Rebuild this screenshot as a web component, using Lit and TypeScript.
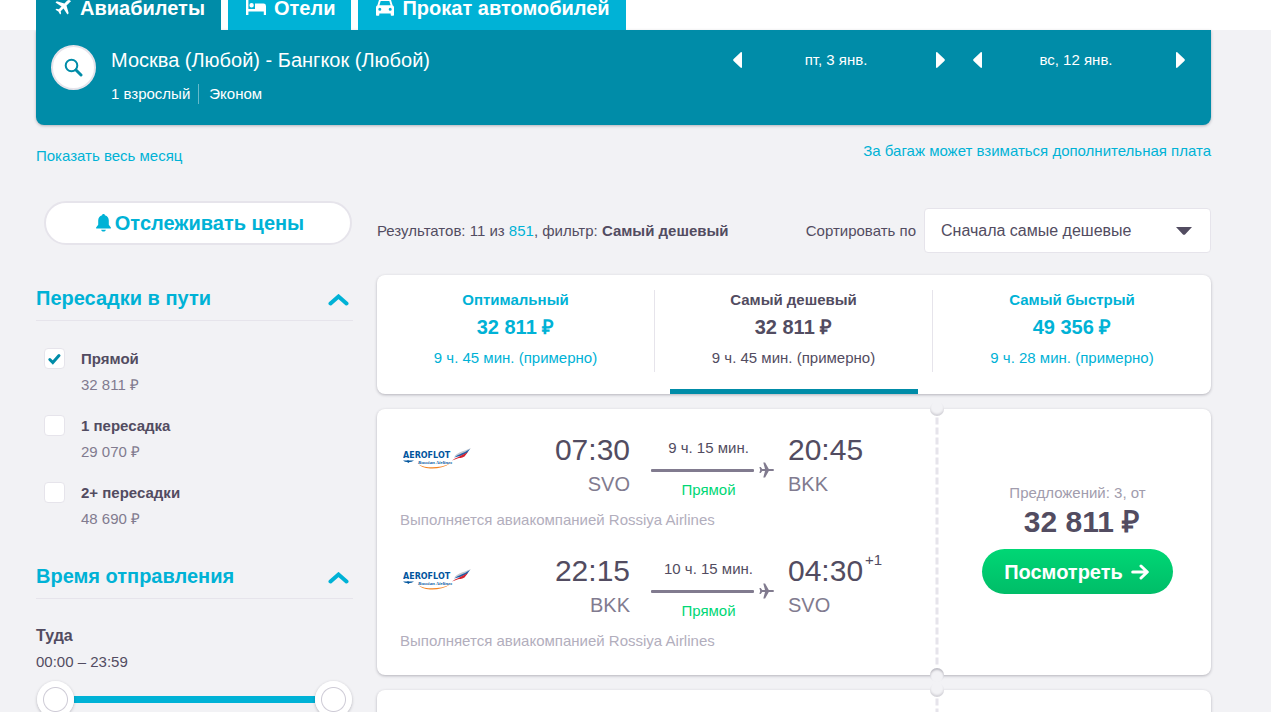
import { LitElement, html, svg, css, nothing } from "lit";
import { customElement, property, state } from "lit/decorators.js";
import { classMap } from "lit/directives/class-map.js";

interface Leg {
  from: string;
  depart: string;
  to: string;
  arrive: string;
  duration: string;
  nextDay?: string;
}

const airplanePath =
  "M16 1.2c-1-1-2.600-.7-3.700.4L9.900 4 2.300 1.700 1 3l6 3.900-2.700 2.800-2.300-.4-1 1 2.900 1.700L5.600 15l1-1-.4-2.300L9 9l3.900 6 1.300-1.300L12 6.100l2.400-2.400C15.500 2.600 17 2.200 16 1.200z";

const icons = {
  plane: svg`<path d=${airplanePath} transform="translate(0.500 0.500)" />`,
  bed: svg`<path d="M0 1h2.400v9H0zM0 10h20v2.600H0zM17.800 12h2.200v4h-2.200zM0 12h2.400v4H0zM5.600 4a2.200 2.200 0 1 1 0 4.400 2.200 2.200 0 0 1 0-4.400zM9 4.600h8.500A2.500 2.500 0 0 1 20 7v3H9z" />`,
  car: svg`<path fill-rule="evenodd" d="M4.600 0h8.800c.8 0 1.300.4 1.600 1.100l1.700 5.400c.8.400 1.300 1.100 1.300 2v7.200c0 .7-.4 1.100-1.100 1.100h-1.100c-.7 0-1.100-.4-1.100-1.100V14.500H3.300v1.200c0 .7-.4 1.100-1.100 1.100H1.100C.4 16.800 0 16.400 0 15.700V8.500c0-.9.5-1.600 1.300-2L3 1.100C3.300.4 3.800 0 4.600 0zM4.700 1.900 3.400 6.200h11.200l-1.300-4.300zM3.800 8.700a1.500 1.500 0 1 0 0 3 1.500 1.500 0 0 0 0-3zm10.400 0a1.500 1.500 0 1 0 0 3 1.500 1.500 0 0 0 0-3z" />`,
};

const aeroflotLogo = html`
  <svg class="logo" width="70" height="22" viewBox="0 0 70 22" role="img" aria-label="Aeroflot">
    <text x="0" y="10" font-family="DejaVu Sans" font-weight="700" font-size="8" fill="#02559d">AEROFLOT</text>
    <path fill="#02559d" d="M0 12.600h4l1-.6 1 .6h5l-2.500 1.200-2 .2-1.200 1-1.200-1-2.100-.2z" />
    <text x="15" y="16" font-family="Liberation Serif" font-style="italic" font-weight="700" font-size="5" fill="#02559d">Russian Airlines</text>
    <path fill="#f58220" d="M16 16.400c6 3.700 20 4.400 31-.9-9 6.500-26 6.600-31 .9z" />
    <path fill="#c3c9d2" d="M51 8.500c3-3.500 8-5 11-6l6-2.500-3 3.500-8 3z" />
    <path fill="#1f5fa8" d="M51 9.500c4-3 8-4 11-5.500l5-3-3 4-7 3z" />
    <path fill="#d5232f" d="M49 12.500c4-3 8-4 11-6l5-2.500-3.500 4.500c-3 2-5 1-7 2z" />
  </svg>
`;

@customElement("flight-leg")
class FlightLeg extends LitElement {
  @property({ attribute: false }) leg!: Leg;

  static styles = css`
    :host {
      display: block;
    }
    .grid {
      display: grid;
      grid-template-columns: 1fr auto 123px 142px;
      height: 78px;
    }
    .logo {
      margin: 16px 0 0 3px;
    }
    .point {
      color: #524c61;
    }
    .depart {
      text-align: right;
    }
    .time {
      display: flex;
      gap: 2px;
      font-size: 30px;
      line-height: 36px;
    }
    .next {
      font-size: 15px;
      line-height: 14px;
    }
    .code {
      margin-top: 4px;
      font-size: 20px;
      line-height: 24px;
      color: #817b8f;
    }
    .route {
      padding-top: 6px;
      text-align: center;
      margin: 0 14px 0 21px;
      width: 123px;
    }
    .grid {
      grid-template-columns: 1fr auto auto 142px;
    }
    .duration,
    .stops {
      padding-right: 8px;
    }
    .path {
      display: flex;
      align-items: center;
      gap: 5px;
      height: 16px;
      margin: 4px 0 2px;
    }
    .line {
      flex: 1;
      height: 3px;
      border-radius: 1px;
      background: #817b8f;
    }
    .stops {
      color: #00d775;
    }
    .operator {
      line-height: 20px;
      color: #b2aebd;
    }
  `;

  render() {
    const l = this.leg;
    return html`
      <div class="grid">
        <div>${aeroflotLogo}</div>
        <div class="point depart">
          <div class="time">${l.depart}</div>
          <div class="code">${l.from}</div>
        </div>
        <div class="route">
          <div class="duration">${l.duration}</div>
          <div class="path">
            <span class="line"></span>
            <svg width="15" height="16" viewBox="0 0 15 16" fill="#817b8f" aria-hidden="true">
              <path d="M15 8c0 .6-.7 1-1.600 1H9.800l-3.700 6.500H4.300L6 9H3.200L1.700 11H.4l.8-3-.8-3h1.300l1.500 2H6L4.300.5h1.800L9.800 7h3.600C14.300 7 15 7.400 15 8z" />
            </svg>
          </div>
          <div class="stops">Прямой</div>
        </div>
        <div class="point">
          <div class="time">
            <span>${l.arrive}</span>${l.nextDay ? html`<span class="next">${l.nextDay}</span>` : nothing}
          </div>
          <div class="code">${l.to}</div>
        </div>
      </div>
      <div class="operator">Выполняется авиакомпанией Rossiya Airlines</div>
    `;
  }
}

@customElement("flight-ticket")
class FlightTicket extends LitElement {
  @property({ attribute: false }) legs: Leg[] = [];
  @property() price = "";

  static styles = css`
    :host {
      display: block;
    }
    .card {
      display: flex;
      border-radius: 8px;
      background: #fff;
      box-shadow: 0 1px 3px rgba(37, 32, 51, 0.3);
    }
    .legs {
      flex: 1;
      display: flex;
      flex-direction: column;
      gap: 23px;
      padding: 23px 0 24px 23px;
    }
    .tear {
      position: relative;
      width: 14px;
    }
    .tear svg {
      position: absolute;
      left: 5px;
      top: 7px;
      height: calc(100% - 16px);
    }
    .notch {
      position: absolute;
      left: 0;
      width: 14px;
      height: 14px;
      border-radius: 7px;
      background: #f2f2f5;
    }
    .top {
      top: -7px;
      box-shadow: inset 0 -2px 2px rgba(37, 32, 51, 0.15);
    }
    .bottom {
      bottom: -7px;
      box-shadow: inset 0 2px 2px rgba(37, 32, 51, 0.25);
    }
    .offer {
      display: flex;
      flex-direction: column;
      align-items: center;
      justify-content: center;
      width: 267px;
      padding-bottom: 7px;
      box-sizing: border-box;
    }
    .count {
      color: #a19cad;
    }
    .price {
      padding-left: 8px;
      font-size: 30px;
      line-height: 38px;
      font-weight: 700;
      color: #524c61;
    }
    .view {
      display: flex;
      align-items: center;
      gap: 8px;
      height: 45px;
      margin-top: 8px;
      padding: 0 24px 0 22px;
      border: 0;
      border-radius: 23px;
      background: linear-gradient(#00d775, #00bd68);
      color: #fff;
      font: 700 20px/24px "Liberation Sans", Arial, sans-serif;
      cursor: pointer;
    }
  `;

  render() {
    return html`
      <article class="card">
        <div class="legs">
          ${this.legs.map((leg) => html`<flight-leg .leg=${leg}></flight-leg>`)}
        </div>
        <div class="tear">
          <svg width="4" aria-hidden="true">
            <line x1="2" y1="3" x2="2" y2="100%" stroke="#e6e4eb" stroke-width="3" stroke-dasharray="4 6" stroke-linecap="square" />
          </svg>
          <span class="notch top"></span>
          <span class="notch bottom"></span>
        </div>
        <div class="offer">
          <div class="count">Предложений: 3, от</div>
          <div class="price">${this.price}</div>
          <button class="view" type="button">
            Посмотреть
            <svg width="18" height="16" viewBox="0 0 18 16" fill="none" stroke="#fff" stroke-width="3" stroke-linecap="round" stroke-linejoin="round" aria-hidden="true">
              <path d="M1.700 8h14M10 2l6.300 6L10 14" />
            </svg>
          </button>
        </div>
      </article>
    `;
  }
}

@customElement("app-root")
class AppRoot extends LitElement {
  @state() private selected = 1;

  private readonly products = [
    { name: "Авиабилеты", icon: icons.plane, width: 18 },
    { name: "Отели", icon: icons.bed, width: 20 },
    { name: "Прокат автомобилей", icon: icons.car, width: 18 },
  ];

  private readonly dates = ["пт, 3 янв.", "вс, 12 янв."];

  private readonly stops = [
    { id: "direct", name: "Прямой", price: "32 811 ₽", checked: true },
    { id: "one", name: "1 пересадка", price: "29 070 ₽", checked: false },
    { id: "many", name: "2+ пересадки", price: "48 690 ₽", checked: false },
  ];

  private readonly sorts = [
    { name: "Оптимальный", price: "32 811 ₽", time: "9 ч. 45 мин. (примерно)" },
    { name: "Самый дешевый", price: "32 811 ₽", time: "9 ч. 45 мин. (примерно)" },
    { name: "Самый быстрый", price: "49 356 ₽", time: "9 ч. 28 мин. (примерно)" },
  ];

  private readonly legs: Leg[] = [
    { from: "SVO", depart: "07:30", to: "BKK", arrive: "20:45", duration: "9 ч. 15 мин." },
    { from: "BKK", depart: "22:15", to: "SVO", arrive: "04:30", duration: "10 ч. 15 мин.", nextDay: "+1" },
  ];

  static styles = css`
    :host {
      display: block;
      height: 100vh;
      overflow: hidden;
      background: #f2f2f5;
      color: #524c61;
      font: 15px/20px "Liberation Sans", Arial, sans-serif;
    }
    button,
    select {
      font: inherit;
      color: inherit;
      border: 0;
      background: none;
      padding: 0;
      cursor: pointer;
    }
    a {
      color: #00b2d6;
      text-decoration: none;
    }
    .header {
      display: flex;
      align-items: flex-end;
      gap: 7px;
      height: 30px;
      padding-left: 36px;
      overflow: hidden;
      background: #fff;
    }
    .product {
      display: flex;
      align-items: center;
      gap: 8px;
      flex: none;
      height: 45px;
      padding: 0 16px 0 18px;
      background: #00b2d6;
      color: #fff;
      font-size: 20px;
      font-weight: 700;
    }
    .product.active {
      background: #008ca8;
    }
    .page {
      padding: 0 60px 0 36px;
    }
    .search {
      display: flex;
      justify-content: space-between;
      height: 95px;
      box-sizing: border-box;
      padding: 15px 26px 0 15px;
      border-radius: 0 0 8px 8px;
      background: #008ca8;
      color: #fff;
      box-shadow: 0 1px 3px rgba(37, 32, 51, 0.3);
    }
    .query {
      display: flex;
      gap: 15px;
    }
    .lens {
      display: grid;
      place-items: center;
      width: 45px;
      height: 45px;
      box-sizing: border-box;
      border: 2px solid #e6e4eb;
      border-radius: 50%;
      background: #fff;
    }
    .route {
      margin: 0 0 12px;
      padding-top: 3px;
      font-size: 20px;
      line-height: 24px;
      font-weight: 400;
    }
    .details {
      display: flex;
      align-items: center;
      gap: 8px;
    }
    .cabin {
      padding-left: 10px;
      border-left: 1px solid #66bacb;
    }
    .dates {
      display: flex;
      gap: 28px;
    }
    .date {
      display: flex;
      align-items: center;
      justify-content: space-between;
      width: 212px;
      height: 30px;
    }
    .arrow {
      display: flex;
    }
    .day {
      padding-right: 6px;
    }
    .notes {
      display: flex;
      justify-content: space-between;
      height: 76px;
    }
    .month {
      padding-top: 21px;
    }
    .baggage {
      padding-top: 16px;
    }
    .columns {
      display: grid;
      grid-template-columns: 317px minmax(0, 1fr);
      gap: 24px;
    }
    .track {
      display: flex;
      align-items: center;
      justify-content: center;
      gap: 4px;
      width: 308px;
      height: 44px;
      margin: 0 0 41px 8px;
      padding-left: 4px;
      border: 2px solid #e6e4eb;
      border-radius: 22px;
      background: #fff;
      color: #00b2d6;
      font-size: 20px;
      font-weight: 700;
    }
    .group {
      margin-bottom: 35px;
    }
    .heading {
      margin: 0 0 27px;
      border-bottom: 1px solid #e6e4eb;
    }
    .toggle {
      display: flex;
      align-items: center;
      justify-content: space-between;
      width: 100%;
      padding: 0 4px 10px 0;
      color: #00b2d6;
      font-size: 20px;
      line-height: 24px;
      font-weight: 700;
    }
    .toggle svg {
      padding-top: 3px;
    }
    .options {
      display: flex;
      flex-direction: column;
      gap: 21px;
      padding-top: 1px;
    }
    .option {
      display: grid;
      grid-template-columns: 21px 1fr;
      gap: 6px 16px;
      padding-left: 8px;
    }
    .box {
      appearance: none;
      width: 21px;
      height: 21px;
      margin: -1px 0 0;
      border: 1px solid #e6e4eb;
      border-radius: 4px;
      background: #fff;
    }
    .box:checked {
      background: #fff
        url("data:image/svg+xml,%3Csvg xmlns='http://www.w3.org/2000/svg' viewBox='0 0 19 19'%3E%3Cpath d='M4.800 10.500l3 3L14 6.500' fill='none' stroke='%23008ca8' stroke-width='3' stroke-linecap='round'/%3E%3C/svg%3E")
        center / 19px;
    }
    .option b,
    .direction b {
      font-weight: 700;
    }
    .option .cost {
      grid-column: 2;
      color: #817b8f;
    }
    .direction {
      display: flex;
      flex-direction: column;
      gap: 6px;
    }
    .direction b {
      font-size: 16px;
    }
    .slider {
      display: grid;
      align-items: center;
      margin: 3px 1px 0;
      background: linear-gradient(#00b2d6, #00b2d6) center / calc(100% - 74px) 7px no-repeat;
    }
    .slider input {
      grid-area: 1 / 1;
      appearance: none;
      width: 100%;
      height: 37px;
      margin: 0;
      background: none;
      pointer-events: none;
    }
    .slider input::-webkit-slider-thumb {
      appearance: none;
      width: 37px;
      height: 37px;
      border-radius: 50%;
      background: radial-gradient(circle, #fff 11px, #cecbd6 12px, #cecbd6 12px, #fff 13px);
      box-shadow: 0 1px 3px rgba(37, 32, 51, 0.3);
      pointer-events: auto;
    }
    .results {
      padding-top: 7px;
    }
    .bar {
      display: flex;
      align-items: center;
      justify-content: space-between;
      margin-bottom: 22px;
    }
    .sort {
      display: flex;
      align-items: center;
      gap: 8px;
    }
    .select {
      appearance: none;
      width: 287px;
      height: 45px;
      padding: 0 16px;
      border: 1px solid #e6e4eb;
      border-radius: 4px;
      font-size: 16px;
      background: #fff
        url("data:image/svg+xml,%3Csvg xmlns='http://www.w3.org/2000/svg' viewBox='0 0 16 8'%3E%3Cpath d='M0 0h16L9.500 7a2 2 0 0 1-3 0z' fill='%23524c61'/%3E%3C/svg%3E")
        right 18px center / 16px 8px no-repeat;
    }
    .tabs {
      display: grid;
      grid-template-columns: repeat(3, 1fr);
      border-radius: 8px;
      background: #fff;
      box-shadow: 0 1px 3px rgba(37, 32, 51, 0.3);
    }
    .tab {
      display: flex;
      flex-direction: column;
      padding: 15px 0 0;
      color: #00b2d6;
    }
    .tab.active {
      color: #524c61;
    }
    .tab .body {
      display: flex;
      flex-direction: column;
      align-items: center;
      width: 100%;
      height: 82px;
      box-sizing: border-box;
      border-right: 1px solid #e6e4eb;
    }
    .tab:last-child .body {
      border-right: 0;
    }
    .tab .sum {
      margin: 5px 0 9px;
      font-size: 20px;
      line-height: 24px;
      font-weight: 700;
    }
    .marker {
      align-self: stretch;
      height: 5px;
      margin: 17px 15px 0;
    }
    .active .marker {
      background: #008ca8;
    }
    flight-ticket {
      margin-top: 15px;
    }
  `;

  private heading(title: string) {
    return html`
      <h2 class="heading">
        <button class="toggle" type="button" aria-expanded="true">
          ${title}
          <svg width="21" height="12" viewBox="0 0 21 12" fill="none" stroke="#00b2d6" stroke-width="4" stroke-linecap="round" aria-hidden="true">
            <path d="M2.500 9.500l8-7 8 7" />
          </svg>
        </button>
      </h2>
    `;
  }

  render() {
    return html`
      <nav class="header">
        ${this.products.map(
          (p, i) => html`
            <a href="#" class=${classMap({ product: true, active: i === 0 })}>
              <svg width=${p.width} height="17" viewBox="0 0 ${p.width} 17" fill="#fff" aria-hidden="true">${p.icon}</svg>
              ${p.name}
            </a>
          `,
        )}
      </nav>
      <div class="page">
        <section class="search">
          <div class="query">
            <button class="lens" type="button" aria-label="Изменить поиск">
              <svg width="19" height="19" viewBox="0 0 19 19" fill="none" stroke="#008ca8" stroke-linecap="round" aria-hidden="true">
                <circle cx="7.500" cy="7.500" r="5.800" stroke-width="2" />
                <path d="M12 12l5 5" stroke-width="3" />
              </svg>
            </button>
            <div>
              <h1 class="route">Москва (Любой) - Бангкок (Любой)</h1>
              <div class="details"><span>1 взрослый</span><span class="cabin">Эконом</span></div>
            </div>
          </div>
          <div class="dates">
            ${this.dates.map(
              (d) => html`
                <div class="date">
                  <button class="arrow" type="button" aria-label="Предыдущий день">
                    <svg width="9" height="16" viewBox="0 0 9 16" fill="#fff"><path d="M9 1v14c0 1-.8 1.300-1.500.6L.6 9a1.500 1.500 0 0 1 0-2L7.500.4C8.200-.3 9 0 9 1z" /></svg>
                  </button>
                  <span class="day">${d}</span>
                  <button class="arrow" type="button" aria-label="Следующий день">
                    <svg width="9" height="16" viewBox="0 0 9 16" fill="#fff"><path d="M0 1v14c0 1 .8 1.300 1.500.6L8.400 9a1.500 1.500 0 0 0 0-2L1.500.4C.8-.3 0 0 0 1z" /></svg>
                  </button>
                </div>
              `,
            )}
          </div>
        </section>
        <div class="notes">
          <a class="month" href="#">Показать весь месяц</a>
          <a class="baggage" href="#">За багаж может взиматься дополнительная плата</a>
        </div>
        <div class="columns">
          <aside>
            <button class="track" type="button">
              <svg width="15" height="18" viewBox="0 0 15 18" fill="#00b2d6" aria-hidden="true">
                <path d="M7.500 0c.8 0 1.300.5 1.400 1.200C11.500 1.900 12.800 4 12.800 6.500v4.300l1.900 2.500c.5.700.2 1.200-.5 1.200H.8c-.7 0-1-.5-.5-1.200l1.900-2.500V6.500C2.200 4 3.500 1.900 6.100 1.200 6.200.5 6.700 0 7.500 0zM5.200 15.700h4.600c0 1-1 1.800-2.300 1.800s-2.300-.8-2.300-1.800z" />
              </svg>
              Отслеживать цены
            </button>
            <section class="group">
              ${this.heading("Пересадки в пути")}
              <div class="options">
                ${this.stops.map(
                  (s) => html`
                    <label class="option" for=${s.id}>
                      <input class="box" type="checkbox" id=${s.id} .checked=${s.checked} />
                      <b>${s.name}</b>
                      <span class="cost">${s.price}</span>
                    </label>
                  `,
                )}
              </div>
            </section>
            <section class="group">
              ${this.heading("Время отправления")}
              <div class="direction">
                <b>Туда</b>
                <span>00:00 – 23:59</span>
                <div class="slider">
                  <input type="range" min="0" max="1439" .value=${"0"} aria-label="Туда: не раньше" />
                  <input type="range" min="0" max="1439" .value=${"1439"} aria-label="Туда: не позже" />
                </div>
              </div>
            </section>
          </aside>
          <main class="results">
            <div class="bar">
              <span>Результатов: 11 из <a href="#">851</a>, фильтр: <b>Самый дешевый</b></span>
              <div class="sort">
                <label for="sort">Сортировать по</label>
                <select class="select" id="sort">
                  <option>Сначала самые дешевые</option>
                </select>
              </div>
            </div>
            <div class="tabs">
              ${this.sorts.map(
                (s, i) => html`
                  <button
                    type="button"
                    class=${classMap({ tab: true, active: i === this.selected })}
                    @click=${() => (this.selected = i)}
                  >
                    <span class="body">
                      <b>${s.name}</b>
                      <span class="sum">${s.price}</span>
                      <span>${s.time}</span>
                    </span>
                    <span class="marker"></span>
                  </button>
                `,
              )}
            </div>
            <flight-ticket .legs=${this.legs} price="32 811 ₽"></flight-ticket>
            <flight-ticket .legs=${this.legs} price="32 811 ₽"></flight-ticket>
          </main>
        </div>
      </div>
    `;
  }
}
